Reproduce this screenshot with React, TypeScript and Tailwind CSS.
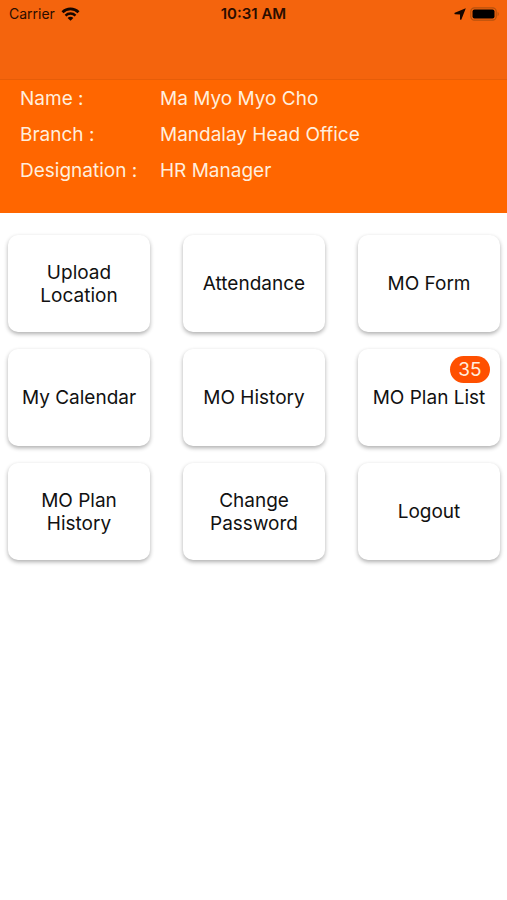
const profile = [
  { label: 'Name :', value: 'Ma Myo Myo Cho' },
  { label: 'Branch :', value: 'Mandalay Head Office' },
  { label: 'Designation :', value: 'HR Manager' },
];

const menuItems = [
  { label: 'Upload Location' },
  { label: 'Attendance' },
  { label: 'MO Form' },
  { label: 'My Calendar' },
  { label: 'MO History' },
  { label: 'MO Plan List', badge: 35 },
  { label: 'MO Plan History' },
  { label: 'Change Password' },
  { label: 'Logout' },
];

function StatusBar() {
  return (
    <div className="grid grid-cols-3 items-center h-7 px-[7px] text-sm text-[#2a0d00]">
      <div className="flex items-center gap-[6px] pl-[2px]">
        <span>Carrier</span>
        <svg className="w-[19px] h-[14px]" viewBox="0 0 18 14" fill="none" stroke="#160600" strokeWidth="2.8">
          <path d="M1 5.2a11.4 11.4 0 0 1 16 0" />
          <path d="M4 8.6a7.1 7.1 0 0 1 10 0" strokeWidth="2.4" />
          <path d="M9 13.8 6.1 10.9a4 4 0 0 1 5.8 0z" fill="#160600" stroke="none" />
        </svg>
      </div>
      <span className="text-center text-[15px] font-semibold">10:31 AM</span>
      <div className="flex items-center justify-end gap-1">
        <svg className="w-3 h-3" viewBox="0 0 12 12" fill="#160600">
          <path d="M11.8 0.2 7.4 11.4Q6.6 12.2 6 11.2V6.4L1 6.2Q0 5.6 0.8 4.8z" />
        </svg>
        <svg className="w-[30px] h-[14px]" viewBox="0 0 30 14">
          <rect x="0.8" y="0.8" width="25.4" height="12.4" rx="3.6" fill="none" stroke="#b5510e" strokeWidth="1.2" />
          <rect x="2.5" y="2.5" width="22" height="9" rx="2" fill="#000" />
          <path d="M27.6 4.8a2.6 2.6 0 0 1 0 4.4z" fill="#b5510e" />
        </svg>
      </div>
    </div>
  );
}

export default function App() {
  return (
    <div className="min-h-screen bg-white font-['Inter','Liberation_Sans',sans-serif]">
      {/* Navigation bar */}
      <header className="h-20 bg-[#f4640d] border-b border-[#e65d08]">
        <StatusBar />
      </header>

      {/* Profile */}
      <dl className="bg-[#ff6600] px-5 pt-px pb-6 text-[19px] leading-9 text-[#ffeedd]">
        {profile.map((row) => (
          <div key={row.label} className="flex">
            <dt className="w-[140px] shrink-0">{row.label}</dt>
            <dd>{row.value}</dd>
          </div>
        ))}
      </dl>

      {/* Menu */}
      <main className="grid grid-cols-3 gap-x-[33px] gap-y-[17px] pl-2 pr-[7px] pt-[22px]">
        {menuItems.map((item) => (
          <button
            key={item.label}
            type="button"
            className="relative flex items-center justify-center h-[97px] px-3 rounded-[10px] bg-white text-[19px] leading-[23px] text-[#111] shadow-[0_2px_4px_rgba(0,0,0,0.32)]"
          >
            <span>{item.label}</span>
            {item.badge && (
              <span className="absolute top-[7px] right-[10px] w-10 h-[27px] rounded-full bg-[#ff5000] text-[#ffeedd] leading-[27px]">
                {item.badge}
              </span>
            )}
          </button>
        ))}
      </main>
    </div>
  );
}
